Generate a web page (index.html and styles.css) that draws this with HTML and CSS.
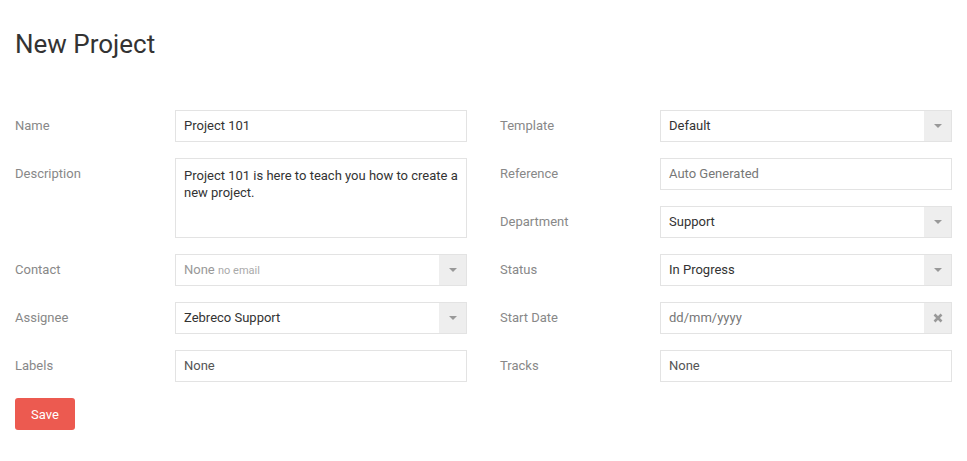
FILE: index.html
```html
<!DOCTYPE html>
<html>
<head>
<meta charset="utf-8">
<link rel="stylesheet" href="styles.css">
</head>
<body>
<div class="page">
  <h1 class="title">New Project</h1>
  <div class="form">
    <div class="col">
      <div class="row"><div class="label">Name</div><div class="field"><div class="input">Project 101</div></div></div>
      <div class="row"><div class="label">Description</div><div class="field"><div class="input textarea">Project 101 is here to teach you how to create a new project.</div></div></div>
      <div class="row"><div class="label">Contact</div><div class="field"><div class="input select"><span class="value muted">None <small>no email</small></span><span class="addon"><span class="caret"></span></span></div></div></div>
      <div class="row"><div class="label">Assignee</div><div class="field"><div class="input select"><span class="value">Zebreco Support</span><span class="addon"><span class="caret"></span></span></div></div></div>
      <div class="row"><div class="label">Labels</div><div class="field"><div class="input muted2">None</div></div></div>
    </div>
    <div class="col">
      <div class="row"><div class="label">Template</div><div class="field"><div class="input select"><span class="value">Default</span><span class="addon"><span class="caret"></span></span></div></div></div>
      <div class="row"><div class="label">Reference</div><div class="field"><div class="input placeholder">Auto Generated</div></div></div>
      <div class="row"><div class="label">Department</div><div class="field"><div class="input select"><span class="value">Support</span><span class="addon"><span class="caret"></span></span></div></div></div>
      <div class="row"><div class="label">Status</div><div class="field"><div class="input select"><span class="value">In Progress</span><span class="addon"><span class="caret"></span></span></div></div></div>
      <div class="row"><div class="label">Start Date</div><div class="field"><div class="input select"><span class="value placeholder">dd/mm/yyyy</span><span class="addon"><svg class="x" width="10" height="10" viewBox="0 0 10 10"><path d="M1.5 1.5 L8.5 8.5 M8.5 1.5 L1.5 8.5" stroke="#999" stroke-width="2.6" stroke-linecap="butt"/></svg></span></div></div></div>
      <div class="row"><div class="label">Tracks</div><div class="field"><div class="input muted2">None</div></div></div>
    </div>
  </div>
  <button class="save">Save</button>
</div>
</body>
</html>
```
FILE: styles.css
```css
* { box-sizing: border-box; }
body { margin: 0; font-family: Roboto, "Liberation Sans", sans-serif; color: #333; background: #fff; }
.page { padding: 28px 15px 0 15px; }
.title { margin: 0; font-size: 26px; font-weight: 400; line-height: 32px; color: #333; }
.form { display: flex; gap: 33px; margin-top: 50px; }
.col { width: 452px; display: flex; flex-direction: column; gap: 16px; }
.row { display: flex; align-items: flex-start; }
.label { width: 160px; flex: none; font-size: 13px; color: #888; line-height: 32px; }
.field { flex: 1; }
.input { border: 1px solid #e3e3e3; height: 32px; padding: 0 8px; font-size: 13px; line-height: 30px; color: #333; display: flex; align-items: center; }
.textarea { height: 80px; align-items: flex-start; line-height: 17px; padding-top: 8px; }
.select { padding-right: 0; }
.value { flex: 1; }
.muted { color: #999; }
.muted small { font-size: 11px; color: #aaa; }
.muted2 { color: #555; }
.placeholder { color: #777; }
.addon { width: 27px; height: 30px; background: #eee; display: flex; align-items: center; justify-content: center; flex: none; }
.caret { width: 0; height: 0; border-left: 4px solid transparent; border-right: 4px solid transparent; border-top: 4px solid #999; }
.x { display: block; }
.save { margin-top: 16px; width: 60px; height: 32px; border: none; border-radius: 3px; background: #ec5a50; color: #fff; font-family: Roboto, "Liberation Sans", sans-serif; font-size: 13px; padding: 0; }
```
